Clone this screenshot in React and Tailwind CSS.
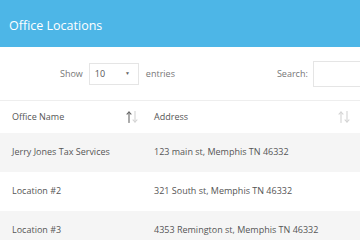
import React from "react";

function SortIcon({ active }) {
  return (
    <svg width="12" height="12" viewBox="0 0 12 12" className="shrink-0">
      <g stroke={active ? "#666" : "#d4d4d4"} strokeWidth="1.1" fill="none" strokeLinecap="round">
        <line x1="3" y1="1" x2="3" y2="11.5" />
        <polyline points="1,3.2 3,1 5,3.2" />
      </g>
      <g stroke="#d4d4d4" strokeWidth="1.1" fill="none" strokeLinecap="round">
        <line x1="9" y1="0.5" x2="9" y2="11" />
        <polyline points="7,8.8 9,11 11,8.8" />
      </g>
    </svg>
  );
}

const rows = [
  ["Jerry Jones Tax Services", "123 main st, Memphis TN 46332"],
  ["Location #2", "321 South st, Memphis TN 46332"],
  ["Location #3", "4353 Remington st, Memphis TN 46332"],
];

export default function App() {
  return (
    <div
      className="w-[360px] h-[240px] overflow-hidden bg-white text-[#555]"
      style={{ fontFamily: '"Open Sans", sans-serif' }}
    >
      <div className="h-[47px] bg-[#4db6e7] flex items-center pl-[9px] pt-[5px]">
        <span className="text-white text-[12.5px] leading-none">Office Locations</span>
      </div>
      <div className="h-[53px] flex items-center text-[9px] text-[#777] whitespace-nowrap">
        <div className="flex items-center pl-[60px]">
          <span>Show</span>
          <div className="ml-[6px] w-[50px] h-[22px] border border-[#e5e5e5] flex items-center justify-between pl-[5px] pr-[8px] text-[#555]">
            <span>10</span>
            <span className="text-[5px] text-[#666]">▼</span>
          </div>
          <span className="ml-[7px]">entries</span>
        </div>
        <div className="flex items-center ml-[102px]">
          <span>Search:</span>
          <div className="ml-[5px] w-[80px] h-[26px] border border-[#e5e5e5] shrink-0" />
        </div>
      </div>
      <div className="border-t border-[#eeeeee] text-[9px]">
        <div className="h-[32px] flex items-center">
          <div className="w-[142px] flex items-center justify-between pl-[12px] pr-[4px]">
            <span>Office Name</span>
            <SortIcon active />
          </div>
          <div className="flex-1 flex items-center justify-between pl-[12px] pr-[10px]">
            <span>Address</span>
            <SortIcon />
          </div>
        </div>
        {rows.map((r, i) => (
          <div
            key={i}
            className={`h-[39px] flex items-center pb-[2px] ${i % 2 === 0 ? "bg-[#f5f5f5]" : "bg-white"}`}
          >
            <div className="w-[142px] pl-[12px]">{r[0]}</div>
            <div className="flex-1 pl-[12px]">{r[1]}</div>
          </div>
        ))}
      </div>
    </div>
  );
}
